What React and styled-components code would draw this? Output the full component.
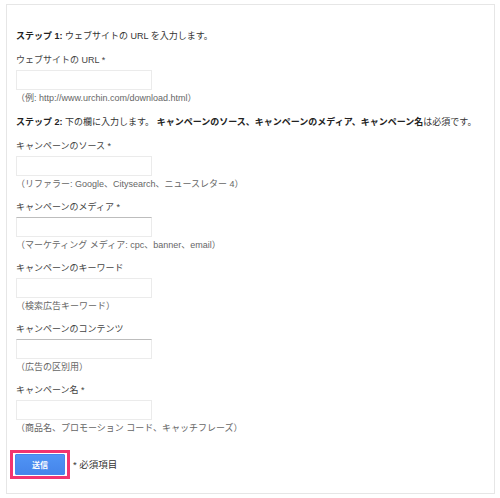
import React from "react";
import styled, { createGlobalStyle } from "styled-components";

const GlobalStyle = createGlobalStyle`
  body {
    margin: 0;
    background: #ffffff;
    font-family: "Liberation Sans", "Noto Sans CJK JP", sans-serif;
  }
`;

const fields = [
  {
    label: "キャンペーンのソース *",
    hint: "（リファラー: Google、Citysearch、ニュースレター 4）",
  },
  {
    label: "キャンペーンのメディア *",
    hint: "（マーケティング メディア: cpc、banner、email）",
    inset: true,
  },
  { label: "キャンペーンのキーワード", hint: "（検索広告キーワード）" },
  { label: "キャンペーンのコンテンツ", hint: "（広告の区別用）", inset: true },
  {
    label: "キャンペーン名 *",
    hint: "（商品名、プロモーション コード、キャッチフレーズ）",
  },
];

export default function App() {
  return (
    <>
      <GlobalStyle />
      <Frame>
        <Step>
          <b>ステップ 1:</b> ウェブサイトの URL を入力します。
        </Step>
        <Field>
          <Label>ウェブサイトの URL *</Label>
          <Input type="text" />
          <Hint>（例: http://www.urchin.com/download.html）</Hint>
        </Field>
        <Step>
          <b>ステップ 2:</b> 下の欄に入力します。{" "}
          <b>キャンペーンのソース、キャンペーンのメディア、キャンペーン名</b>
          は必須です。
        </Step>
        {fields.map((f) => (
          <Field key={f.label}>
            <Label>{f.label}</Label>
            <Input type="text" $inset={f.inset} />
            <Hint>{f.hint}</Hint>
          </Field>
        ))}
        <SubmitRow>
          <Highlight>
            <SubmitButton type="button">送信</SubmitButton>
          </Highlight>
          <Required>* 必須項目</Required>
        </SubmitRow>
      </Frame>
    </>
  );
}

const Frame = styled.div`
  box-sizing: border-box;
  margin: 4px 6px 0 6px;
  width: 489px;
  height: 490px;
  border: 1px solid #e6e6e6;
  padding: 24px 9px 0 9px;
  display: flex;
  flex-direction: column;
  gap: 11px;
  font-size: 9px;
  line-height: 12px;
  color: #333333;
`;

const Step = styled.div`
  margin: 1px 0;
  color: #333333;
  white-space: nowrap;

  b {
    font-weight: bold;
    color: #222222;
  }
`;

const Field = styled.div`
  display: flex;
  flex-direction: column;
`;

const Label = styled.div`
  color: #444444;
`;

const Input = styled.input`
  box-sizing: border-box;
  width: 136px;
  height: 20px;
  margin: 4px 0 2px 0;
  padding: 0 4px;
  border: 1px solid #ebebeb;
  border-top-color: ${(p) => (p.$inset ? "#bdbdbd" : "#ebebeb")};
  background: #ffffff;
  font-size: 9px;
  outline: none;
`;

const Hint = styled.div`
  color: #666666;
`;

const SubmitRow = styled.div`
  display: flex;
  align-items: center;
  gap: 3px;
  margin: 5px 0 0 -6px;
`;

const Highlight = styled.span`
  display: inline-flex;
  border: 3px solid #f2346f;
  padding: 1px 2px;
`;

const SubmitButton = styled.button`
  width: 50px;
  height: 21px;
  border: 1px solid #4a86e8;
  border-radius: 1px;
  background: linear-gradient(#5094f5, #4585ea);
  color: #ffffff;
  font-family: "Liberation Sans", "Noto Sans CJK JP", sans-serif;
  font-size: 8px;
  font-weight: bold;
  padding: 0;
`;

const Required = styled.span`
  color: #333333;
  font-size: 9.5px;
`;
